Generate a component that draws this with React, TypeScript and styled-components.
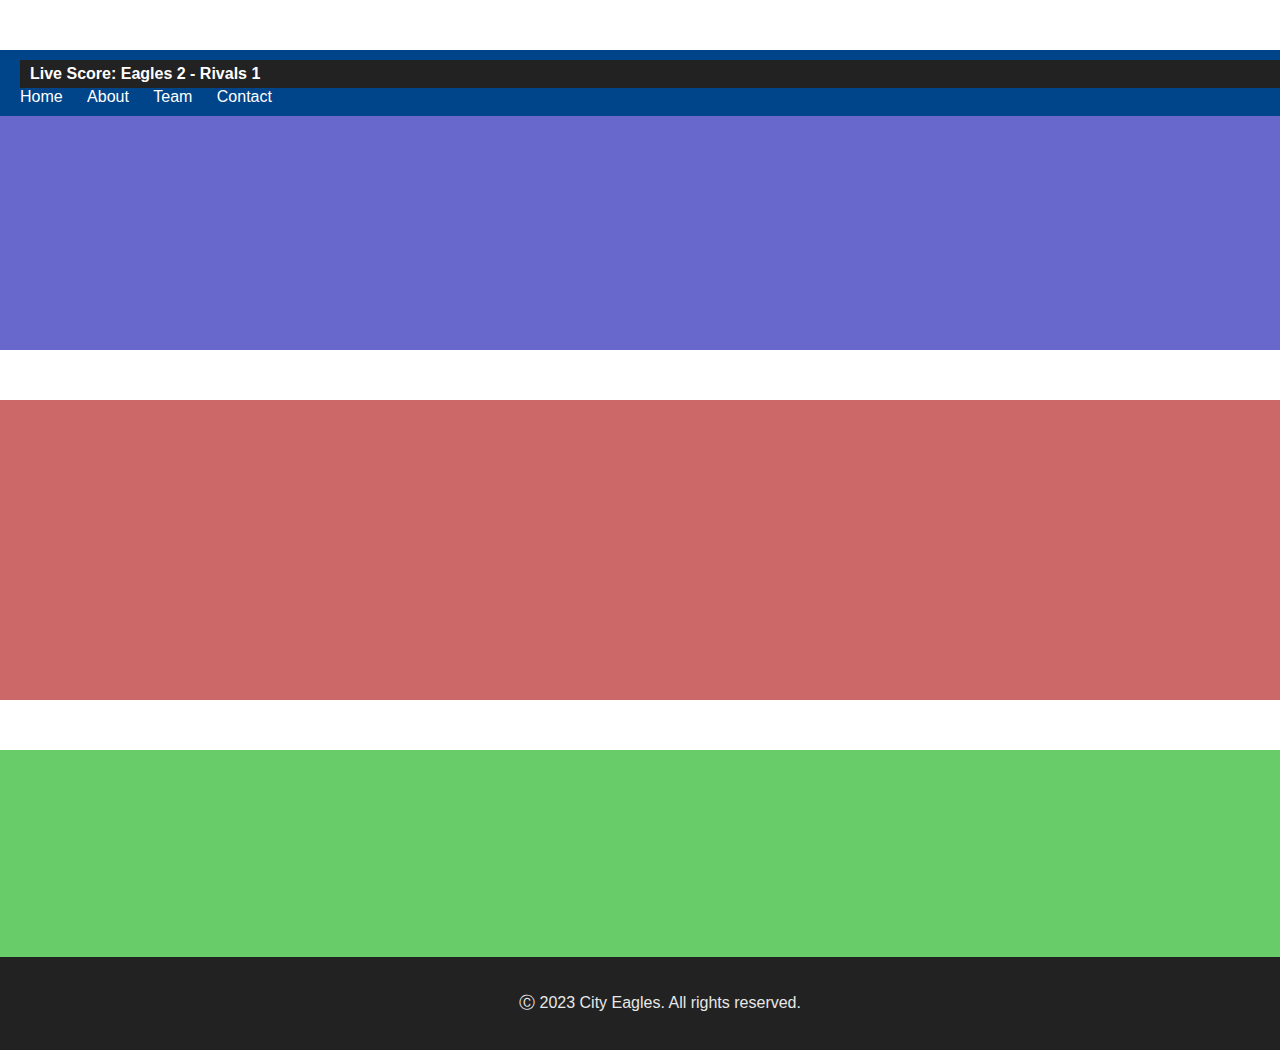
import React from "react";
import styled, { createGlobalStyle } from "styled-components";

const GlobalStyle = createGlobalStyle`
  html, body {
    margin: 0;
    padding: 0;
    overflow-x: hidden;
    background: #fff;
    font-family: "Liberation Sans", Arial, sans-serif;
  }
`;

const Page = styled.div`
  display: flex;
  flex-direction: column;
  padding-top: 50px;
`;

const Header = styled.header`
  background-color: #00448a;
  padding: 10px 20px;
`;

const ScoreBar = styled.div`
  background-color: #222;
  color: #fff;
  font-weight: bold;
  font-size: 16px;
  line-height: 18px;
  padding: 5px 10px;
  margin-right: -20px;
`;

const Nav = styled.nav`
  display: flex;
  gap: 24.4px;
  > a {
    color: #fff;
    font-size: 16px;
    line-height: 18px;
    text-decoration: none;
  }
`;

const Section = styled.section<{ $bg: string; $h: number; $gap?: number }>`
  background-color: ${(p) => p.$bg};
  height: ${(p) => p.$h}px;
  margin-top: ${(p) => p.$gap ?? 0}px;
`;

const Footer = styled.footer`
  background-color: #222;
  color: #e8e8e8;
  text-align: center;
  font-size: 16px;
  line-height: 19px;
  padding: 36px 0 38px 40px;
`;

const App = () => {
  const links = ["Home", "About", "Team", "Contact"];
  return (
    <Page>
      <GlobalStyle />
      <Header>
        <ScoreBar>Live Score: Eagles 2 - Rivals 1</ScoreBar>
        <Nav>
          {links.map((l) => (
            <a key={l} href="#">{l}</a>
          ))}
        </Nav>
      </Header>
      <Section $bg="#6868cc" $h={234} />
      <Section $bg="#cc6868" $h={300} $gap={50} />
      <Section $bg="#68cc68" $h={207} $gap={50} />
      <Footer>Ⓒ 2023 City Eagles. All rights reserved.</Footer>
    </Page>
  );
};

export default App;
